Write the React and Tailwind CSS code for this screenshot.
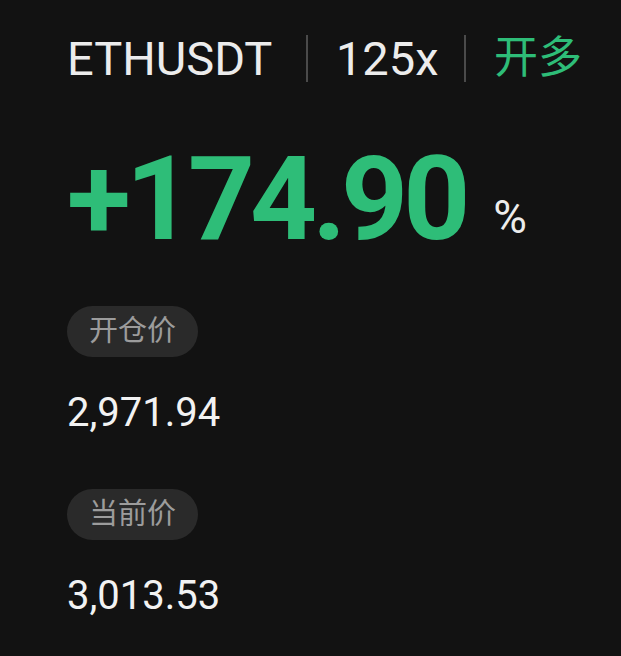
export default function App() {
  return (
    <div
      className="w-[621px] h-[656px] bg-[#121212] pl-[67px] pt-[26px] overflow-hidden"
      style={{ fontFamily: 'Roboto, "Noto Sans CJK SC", sans-serif' }}
    >
      <div className="flex items-center h-[64px]">
        <span className="text-[47px] leading-none text-[#ececec]">ETHUSDT</span>
        <span className="w-[1.5px] h-[47px] bg-[#4a4a4a] ml-[34px] mr-[28px]" />
        <span className="text-[47px] leading-none text-[#ececec]">125x</span>
        <span className="w-[1.5px] h-[47px] bg-[#4a4a4a] ml-[26px] mr-[28px]" />
        <span className="text-[44px] leading-none text-[#2ebd78]">开多</span>
      </div>
      <div className="flex items-end mt-[58px] h-[110px]">
        <span className="text-[117px] leading-none font-bold tracking-[-5px] text-[#2ebd78]">
          +174.90
        </span>
        <span className="text-[46px] leading-none text-[#ececec] ml-[28px] mb-[18px]">%</span>
      </div>
      <div className="mt-[48px] flex flex-col items-start">
        <span className="h-[51px] w-[131px] rounded-full bg-[#2a2a2a] flex items-center justify-center text-[29px] text-[#9c9c9c]">
          开仓价
        </span>
        <span className="mt-[36px] text-[40px] leading-none text-[#f2f2f2]">2,971.94</span>
        <span className="mt-[56px] h-[51px] w-[131px] rounded-full bg-[#2a2a2a] flex items-center justify-center text-[29px] text-[#9c9c9c]">
          当前价
        </span>
        <span className="mt-[36px] text-[40px] leading-none text-[#f2f2f2]">3,013.53</span>
      </div>
    </div>
  );
}
